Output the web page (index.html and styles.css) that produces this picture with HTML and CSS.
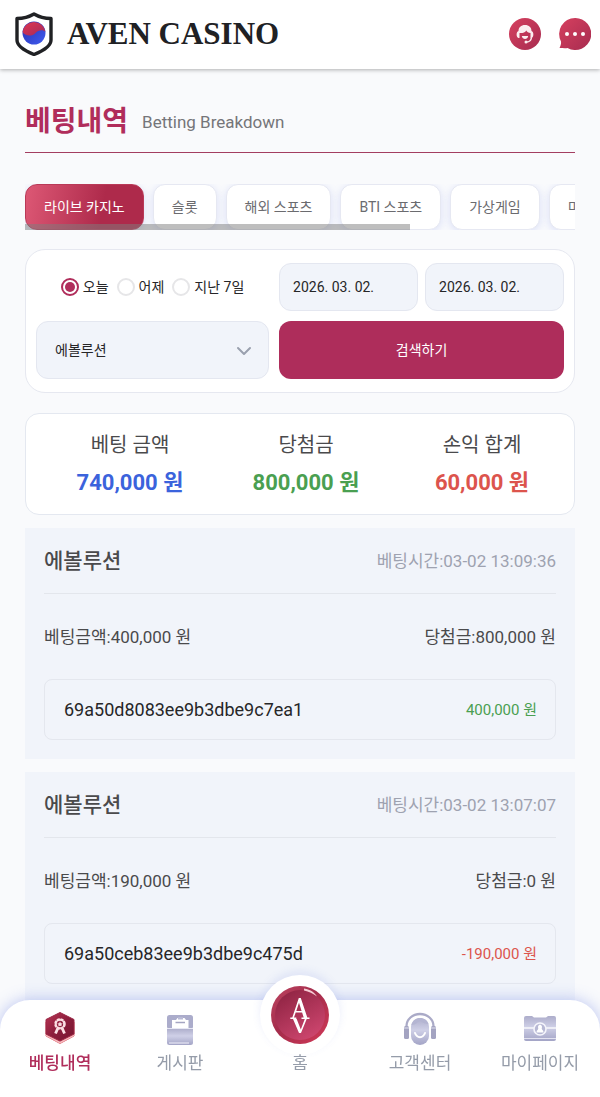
FILE: index.html
```html
<!DOCTYPE html>
<html lang="ko">
<head>
  <meta charset="utf-8">
  <title>AVEN CASINO</title>
  <meta name="viewport" content="width=device-width, initial-scale=1">
  <link rel="stylesheet" href="styles.css">
</head>
<body>
  <header class="header">
    <a class="logo" href="#">
      <svg class="logo-mark" viewBox="0 0 38 44" aria-hidden="true">
        <defs>
          <linearGradient id="logoRed" x1="0" y1="0" x2="1" y2="1">
            <stop offset="0" stop-color="#e0354f"/>
            <stop offset="1" stop-color="#a32a5c"/>
          </linearGradient>
          <linearGradient id="logoBlue" x1="0" y1="0" x2="1" y2="1">
            <stop offset="0" stop-color="#2a2fb0"/>
            <stop offset="1" stop-color="#3f5cf0"/>
          </linearGradient>
        </defs>
        <path d="M19 2C14 5 8 6.500 2 6.500V28C2 34 9 38.500 19 42.500C29 38.500 36 34 36 28V6.500C30 6.500 24 5 19 2Z" fill="#fff" stroke="#202124" stroke-width="3.400" stroke-linejoin="round"/>
        <circle cx="19" cy="21" r="11.500" fill="url(#logoBlue)"/>
        <path d="M7.600 20A11.500 11.500 0 0 1 30.400 20C28.500 17.500 23.500 17.500 20.500 21C16.500 25.500 9.500 23.500 7.600 20Z" fill="url(#logoRed)"/>
      </svg>
      <span class="logo-text">AVEN CASINO</span>
    </a>
    <div class="header-links">
      <a href="#" aria-label="고객센터">
        <svg class="header-icon" viewBox="0 0 32 32" aria-hidden="true">
          <defs>
            <linearGradient id="headRed" x1="0" y1="0" x2="1" y2="1">
              <stop offset="0" stop-color="#d6405f"/>
              <stop offset="1" stop-color="#a72c50"/>
            </linearGradient>
          </defs>
          <circle cx="16" cy="16" r="16" fill="url(#headRed)"/>
          <path d="M9.500 13C9.500 9.500 12 7 16 7C20 7 22.500 9.500 22.500 13C25 13.500 25 19.500 22.500 20H21.500V15C19.500 15 18 14 17.300 12.500C16 14.500 13.500 15.300 10.500 15V20H9.500C7 19.500 7 13.500 9.500 13Z" fill="#fbeef0"/>
          <path d="M22.500 19.500C22 22.500 20.500 24 17.500 24" fill="none" stroke="#fbeef0" stroke-width="1.500"/>
          <path d="M12.800 18H19.200C18.700 22 13.300 22 12.800 18Z" fill="#fbeef0"/>
          <circle cx="17" cy="24" r="1.500" fill="#fbeef0"/>
        </svg>
      </a>
      <a href="#" aria-label="채팅">
        <svg class="header-icon" viewBox="0 0 32 32" aria-hidden="true">
          <path d="M16 0A16 16 0 1 1 8.500 30C6 30.500 3 30 .500 30C1.800 27.500 2.200 25.500 2 23.500A16 16 0 0 1 16 0Z" fill="url(#headRed)"/>
          <circle cx="8" cy="16" r="2" fill="#fff"/>
          <circle cx="16" cy="16" r="2" fill="#fff"/>
          <circle cx="24" cy="16" r="2" fill="#fff"/>
        </svg>
      </a>
    </div>
  </header>

  <main class="content">
    <div class="page-title">
      <h1>베팅내역</h1>
      <span>Betting Breakdown</span>
    </div>

    <div class="tabs-wrap">
      <div class="tabs">
        <button class="tab active" type="button">라이브 카지노</button>
        <button class="tab" type="button">슬롯</button>
        <button class="tab" type="button">해외 스포츠</button>
        <button class="tab" type="button">BTI 스포츠</button>
        <button class="tab" type="button">가상게임</button>
        <button class="tab" type="button">미니게임</button>
      </div>
    </div>

    <form class="filter">
      <div class="period">
        <label><input type="radio" name="period" checked>오늘</label>
        <label><input type="radio" name="period">어제</label>
        <label><input type="radio" name="period">지난 7일</label>
      </div>
      <div class="dates">
        <input class="field" type="text" value="2026. 03. 02." aria-label="시작일">
        <input class="field" type="text" value="2026. 03. 02." aria-label="종료일">
      </div>
      <div class="select-wrap">
        <select class="field" aria-label="게임사">
          <option>에볼루션</option>
        </select>
        <svg viewBox="0 0 16 10" aria-hidden="true"><path d="M2 2L8 8L14 2" fill="none" stroke="#9aa0ae" stroke-width="2" stroke-linecap="round" stroke-linejoin="round"/></svg>
      </div>
      <button class="search" type="button">검색하기</button>
    </form>

    <dl class="summary">
      <div>
        <dt>베팅 금액</dt>
        <dd class="blue">740,000 원</dd>
      </div>
      <div>
        <dt>당첨금</dt>
        <dd class="green">800,000 원</dd>
      </div>
      <div>
        <dt>손익 합계</dt>
        <dd class="red">60,000 원</dd>
      </div>
    </dl>

    <section class="record">
      <div class="record-head">
        <h2>에볼루션</h2>
        <span class="time">베팅시간:03-02 13:09:36</span>
      </div>
      <div class="record-amount">
        <span>베팅금액:400,000 원</span>
        <span>당첨금:800,000 원</span>
      </div>
      <div class="record-id">
        <span>69a50d8083ee9b3dbe9c7ea1</span>
        <span class="result green">400,000 원</span>
      </div>
    </section>

    <section class="record">
      <div class="record-head">
        <h2>에볼루션</h2>
        <span class="time">베팅시간:03-02 13:07:07</span>
      </div>
      <div class="record-amount">
        <span>베팅금액:190,000 원</span>
        <span>당첨금:0 원</span>
      </div>
      <div class="record-id">
        <span>69a50ceb83ee9b3dbe9c475d</span>
        <span class="result red">-190,000 원</span>
      </div>
    </section>
  </main>

  <nav class="bottom-nav">
    <a class="nav-item active" href="#">
      <svg viewBox="0 0 34 34" aria-hidden="true">
        <defs>
          <linearGradient id="hexRed" x1="0" y1="0" x2="1" y2="1">
            <stop offset="0" stop-color="#b93555"/>
            <stop offset=".5" stop-color="#8c1e3c"/>
            <stop offset="1" stop-color="#77152f"/>
          </linearGradient>
        </defs>
        <path d="M17 4L31 11V25L17 32.500L3 25V11Z" fill="#e06a76" stroke="#e06a76" stroke-linejoin="round"/>
        <path d="M17 30.500L3 23.500V25L17 32.500L31 25V23.500Z" fill="#f5b9bd"/>
        <path d="M17 1.500L31 8.500V23L17 30L3 23V8.500Z" fill="url(#hexRed)" stroke="#9b2745" stroke-linejoin="round"/>
        <circle cx="17" cy="13" r="4.600" fill="none" stroke="#fbdfe3" stroke-width="2.400" stroke-dasharray="2.900 .710"/>
        <circle cx="17" cy="13" r="4.200" fill="none" stroke="#fbdfe3" stroke-width="1.700"/>
        <path d="M17 10.500L17.900 12.200L19.700 12.400L18.400 13.700L18.700 15.500L17 14.700L15.300 15.500L15.600 13.700L14.300 12.400L16.100 12.200Z" fill="#fbdfe3"/>
        <path d="M14.700 17.500L12.500 22.500M19.300 17.500L21.500 22.500" stroke="#fbdfe3" stroke-width="2.800"/>
      </svg>
      <span>베팅내역</span>
    </a>
    <a class="nav-item" href="#">
      <svg viewBox="0 0 34 34" aria-hidden="true">
        <defs>
          <linearGradient id="navGray" x1="0" y1="0" x2="0" y2="1">
            <stop offset="0" stop-color="#adadcb"/>
            <stop offset=".45" stop-color="#cfd0e7"/>
            <stop offset="1" stop-color="#a3a4c6"/>
          </linearGradient>
        </defs>
        <rect x="4" y="4" width="26" height="14" rx="2.500" fill="#abaccb"/>
        <path d="M9 18V9H13L14.500 7H21.500L23 9H25.500V18Z" fill="#fff"/>
        <path d="M15 6H20V8.500H15Z" fill="#b9bad5"/>
        <path d="M12.500 11.500H22" stroke="#a4a5c2" stroke-width="1.500"/>
        <path d="M4 17.500H30V31.500A2.500 2.500 0 0 1 27.500 34H6.500A2.500 2.500 0 0 1 4 31.500Z" fill="url(#navGray)"/>
        <path d="M4 17.500H30" stroke="#e7e8f4"/>
        <path d="M6 32H26" stroke="#e6e6f3" stroke-width="1.200"/>
      </svg>
      <span>게시판</span>
    </a>
    <a class="nav-item home" href="#">
      <svg viewBox="1 1 80 80" aria-hidden="true">
        <defs>
          <linearGradient id="homeRim" x1="0" y1="0" x2="1" y2="1">
            <stop offset="0" stop-color="#bd4562"/>
            <stop offset=".45" stop-color="#a42c4b"/>
            <stop offset="1" stop-color="#d33958"/>
          </linearGradient>
          <linearGradient id="homeFace" x1=".2" y1="0" x2=".8" y2="1">
            <stop offset="0" stop-color="#8f2443"/>
            <stop offset="1" stop-color="#d04770"/>
          </linearGradient>
        </defs>
        <circle cx="41" cy="41" r="29" fill="url(#homeRim)"/>
        <circle cx="41" cy="41" r="25" fill="url(#homeFace)"/>
        <path d="M45 14.500C52 15.500 56 19 58 22.500C54 19.500 50 17.500 45 16.500Z" fill="#f6cbd4"/>
        <path d="M39.800 24H41.800L48.300 43.400H50.500V45H42.500V43.400H44.700L43.100 38.500H36.700L35 43.400H37.300V45H31.300V43.400H33.300ZM37.300 36.900H42.600L40 28.800Z" fill="#fff" fill-rule="evenodd"/>
        <path d="M34 45H37.700L41.800 55.500L45.800 45H47.700L42 59H40Z" fill="#fff"/>
      </svg>
      <span>홈</span>
    </a>
    <a class="nav-item" href="#">
      <svg viewBox="0 0 34 34" aria-hidden="true">
        <path d="M3.500 17V15A13.500 12 0 0 1 30.500 15V17" fill="none" stroke="#aaaac7" stroke-width="2.300"/>
        <rect x="1" y="15" width="5" height="13" rx="1.500" fill="#a3a3c1"/>
        <rect x="28" y="15" width="5" height="13" rx="1.500" fill="#a3a3c1"/>
        <path d="M1 17H6M28 17H33" stroke="#dedeed"/>
        <rect x="8" y="7" width="18" height="27" rx="9" fill="url(#navGray)"/>
        <path d="M8.500 14C13 14 15 11 17 9C19 12 23 13 25.500 13C24 5 10 4.500 8.500 14Z" fill="#b4b5d2"/>
        <path d="M12 22C14 27.500 20 27.500 22 22" fill="none" stroke="#fff" stroke-width="2" stroke-linecap="round"/>
      </svg>
      <span>고객센터</span>
    </a>
    <a class="nav-item" href="#">
      <svg viewBox="0 0 34 34" aria-hidden="true">
        <path d="M3 5H9L11 6.500H23L25 5H31A2 2 0 0 1 33 7V28A2 2 0 0 1 31 30H3A2 2 0 0 1 1 28V7A2 2 0 0 1 3 5Z" fill="url(#navGray)"/>
        <path d="M1 17H33" stroke="#f5f5fb" stroke-width="1.600"/>
        <path d="M1 27.500H33" stroke="#e2e2f0"/>
        <circle cx="17" cy="18" r="6" fill="#b7b8d4" stroke="#f5f5fb" stroke-width="1.600"/>
        <path d="M13.500 21.500C13.500 19 15 19 15.300 17.500A2 2.500 0 1 1 18.700 17.500C19 19 20.500 19 20.500 21.500Z" fill="#fff"/>
      </svg>
      <span>마이페이지</span>
    </a>
  </nav>
</body>
</html>
```
FILE: styles.css
```css
* {
  box-sizing: border-box;
}
body {
  margin: 0;
  background-color: #f9fafc;
  color: #4a4a4c;
  font-family: Roboto, "Noto Sans CJK KR", sans-serif;
  font-size: 14px;
  line-height: 20px;
}
a {
  color: inherit;
  text-decoration: none;
}
button, input, select {
  font: inherit;
}
h1, h2, dl, dt, dd {
  margin: 0;
}
svg {
  display: block;
}

/* header */
.header {
  display: flex;
  align-items: center;
  justify-content: space-between;
  height: 69px;
  padding: 0 9px 2px 15px;
  background-color: #fff;
  box-shadow: 0 1px 4px rgba(0,0,0,.3);
}
.logo {
  display: flex;
  align-items: center;
  gap: 14px;
}
.logo-mark {
  width: 38px;
  height: 44px;
}
.logo-text {
  color: #202124;
  font-family: "Liberation Serif", serif;
  font-size: 31px;
  font-weight: bold;
  line-height: 36px;
}
.header-links {
  display: flex;
  gap: 18px;
}
.header-icon {
  width: 32px;
  height: 32px;
}

/* page */
.content {
  padding: 16px 25px 94px;
}
.page-title {
  display: flex;
  align-items: center;
  gap: 14px;
  height: 68px;
  padding-top: 7px;
  border-bottom: 1px solid #a33d60;
}
.page-title h1 {
  color: #b02d5b;
  font-size: 28px;
  font-weight: bold;
  line-height: 36px;
}
.page-title span {
  color: #757579;
  font-size: 17px;
}

/* tabs */
.tabs-wrap {
  position: relative;
  margin-top: 31px;
}
.tabs-wrap::after {
  content: "";
  position: absolute;
  left: 0;
  bottom: 0;
  width: 70%;
  height: 6px;
  background-color: rgba(125,125,125,.5);
}
.tabs {
  display: flex;
  gap: 9px;
  overflow: hidden;
}
.tab {
  flex: none;
  height: 46px;
  padding: 0 18px;
  border: 1px solid #e6e8f2;
  border-radius: 12px;
  background-color: #fff;
  box-shadow: 0 2px 8px rgba(100,120,230,.2);
  color: #6b6b6f;
}
.tab.active {
  border-color: #b93a58;
  background-image: linear-gradient(100deg, #dd5875, #ae2a4b 65%);
  color: #fff;
}

/* search filter */
.filter {
  display: grid;
  grid-template-columns: 9fr 11fr;
  gap: 10px;
  margin-top: 19px;
  padding: 13px 10px;
  border: 1px solid #e6e8f0;
  border-radius: 20px;
  background-color: #fff;
  color: #262628;
}
.period {
  display: flex;
  align-items: center;
  justify-content: center;
  gap: 8px;
}
.period label {
  display: flex;
  align-items: center;
  gap: 4px;
}
.period input {
  appearance: none;
  width: 18px;
  height: 18px;
  margin: 0;
  border: 2px solid #e6e6e8;
  border-radius: 50%;
}
.period input:checked {
  border-color: #b02d5b;
  background: #b02d5b content-box;
  padding: 2px;
}
.dates {
  display: grid;
  grid-template-columns: 1fr 1fr;
  gap: 7px;
}
.field {
  width: 100%;
  min-width: 0;
  height: 48px;
  padding: 0 13px;
  border: 1px solid #e4e7f0;
  border-radius: 12px;
  background-color: #f1f4fa;
  color: #262628;
}
.select-wrap {
  position: relative;
}
.select-wrap select {
  appearance: none;
  height: 58px;
  padding: 0 18px;
}
.select-wrap svg {
  position: absolute;
  top: 25px;
  right: 17px;
  width: 16px;
  height: 10px;
  pointer-events: none;
}
.search {
  height: 58px;
  border: 0;
  border-radius: 12px;
  background-color: #ae2d5b;
  color: #fff;
}

/* totals */
.summary {
  display: grid;
  grid-template-columns: repeat(3, 1fr);
  margin-top: 20px;
  padding: 16px 4px 16px 16px;
  border: 1px solid #e4e8f0;
  border-radius: 14px;
  background-color: #fff;
  text-align: center;
}
.summary dt {
  font-size: 20px;
  line-height: 30px;
}
.summary dd {
  margin-top: 8px;
  font-size: 22px;
  font-weight: bold;
  line-height: 30px;
}
.blue {
  color: #3b63dc;
}
.green {
  color: #4a9f51;
}
.red {
  color: #dc544d;
}

/* bet records */
.record {
  margin-top: 13px;
  padding: 0 19px 19px;
  background-color: #f1f4fa;
  font-size: 17px;
}
.record-head {
  display: flex;
  align-items: center;
  justify-content: space-between;
  height: 66px;
  border-bottom: 1px solid #e3e6ec;
}
.record-head h2 {
  font-size: 21px;
  font-weight: 500;
}
.time {
  color: #9ea2b0;
}
.record-amount {
  display: flex;
  align-items: center;
  justify-content: space-between;
  height: 85px;
}
.record-id {
  display: flex;
  align-items: center;
  justify-content: space-between;
  height: 61px;
  padding: 0 18px 0 19px;
  border: 1px solid #e4e7ee;
  border-radius: 8px;
  color: #262628;
  font-size: 18px;
}
.result {
  font-size: 15px;
}

/* bottom menu */
.bottom-nav {
  position: fixed;
  left: 0;
  right: 0;
  bottom: 0;
  display: grid;
  grid-template-columns: repeat(5, 1fr);
  height: 97px;
  border-radius: 30px 30px 0 0;
  background-color: #fff;
  box-shadow: 0 0 16px rgba(90,115,225,.4);
}
.nav-item {
  display: flex;
  flex-direction: column;
  align-items: center;
  justify-content: flex-end;
  gap: 8px;
  padding-bottom: 24px;
  color: #959ca9;
  font-size: 17px;
}
.nav-item svg {
  width: 34px;
  height: 34px;
}
.nav-item.active {
  color: #b02d5b;
  font-weight: 500;
}
/* the round button rises above the bar */
.nav-item.home {
  gap: 0;
}
.nav-item.home svg {
  flex: none;
  width: 80px;
  height: 80px;
  margin: -30px 0 -2px;
  border-radius: 50%;
  background-color: #fff;
  box-shadow: 0 -4px 8px rgba(90,115,225,.12);
}
```
